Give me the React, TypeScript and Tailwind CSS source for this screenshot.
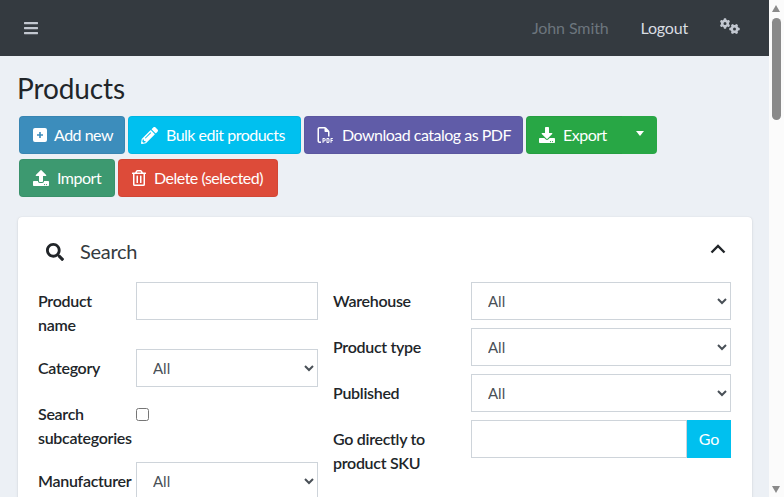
import type { ReactNode } from "react"
import { FaBars, FaDownload, FaPencilAlt, FaRegTrashAlt, FaSearch, FaUpload } from "react-icons/fa"
import { FaGears, FaRegFilePdf } from "react-icons/fa6"

function ActionButton({ icon, label, className }: { icon: ReactNode; label: string; className: string }) {
  return (
    <button className={`h-[38px] flex items-center rounded border border-black/5 text-white text-base tracking-[-0.5px] whitespace-nowrap pl-3 ${className}`}>
      {icon}
      {label}
    </button>
  )
}

function Label({ children, wide }: { children: ReactNode; wide?: boolean }) {
  return (
    <label className={`shrink-0 pt-[7px] pb-3 font-semibold leading-6 tracking-[-0.3px] text-[#212529] ${wide ? "w-[138px]" : "w-[98px]"}`}>
      {children}
    </label>
  )
}

function AllSelect() {
  return (
    <select className="w-full h-[38px] mb-2 pl-3 bg-white border border-[#ced4da] text-[#495057] text-[15px]">
      <option>All</option>
    </select>
  )
}

export default function App() {
  return (
    <div className="min-h-[2256px] bg-[#ecf0f5] font-['Lato','Liberation_Sans',sans-serif] text-base">
      <nav className="h-14 bg-[#343a40] flex items-center pl-6 pr-[44px]">
        <FaBars className="w-[14px] h-4 text-[#c2c7d0]" />
        <span className="ml-auto text-[#6c757d] tracking-[-0.1px]">John Smith</span>
        <a className="ml-8 text-[#d9dde2] tracking-[-0.2px]">Logout</a>
        <FaGears className="ml-[32px] w-5 h-4 mb-1 text-[#c2c7d0]" />
      </nav>

      <div className="pl-[17px] pt-4 w-[750px]">
        <h1 className="text-[28px] leading-[32px] tracking-[-0.1px] text-[#212529]">Products</h1>

        <div className="flex flex-wrap gap-x-[3px] gap-y-[5px] ml-0.5 mt-3">
          <ActionButton
            className="w-[106px] bg-[#3c8dbc]"
            icon={
              <svg className="w-[14px] h-[14px] mr-[7px] ml-px" viewBox="0 0 14 14" fill="currentColor">
                <path fillRule="evenodd" d="M2 0h10a2 2 0 0 1 2 2v10a2 2 0 0 1-2 2H2a2 2 0 0 1-2-2V2a2 2 0 0 1 2-2Zm4.2 4v2.2H4v1.6h2.2V10h1.6V7.800H10V6.200H7.800V4H6.200Z" />
              </svg>
            }
            label="Add new"
          />
          <ActionButton className="w-[173px] bg-[#00c0ef]" icon={<FaPencilAlt className="w-[17px] h-[17px] mr-2" />} label="Bulk edit products" />
          <ActionButton className="w-[219px] bg-[#605ca8]" icon={<FaRegFilePdf className="w-[17px] h-4 mr-2" />} label="Download catalog as PDF" />
          <div className="flex w-[131px]">
            <ActionButton className="w-[96px] bg-[#28a745] rounded-r-none border-r-0" icon={<FaDownload className="w-4 h-4 mr-2" />} label="Export" />
            <button className="w-[35px] h-[38px] flex items-center justify-center rounded-r bg-[#28a745]">
              <span className="mb-1 border-x-4 border-t-[5px] border-x-transparent border-t-white" />
            </button>
          </div>
        </div>
        <div className="flex gap-x-[3px] ml-0.5 mt-[5px]">
          <ActionButton className="w-[96px] bg-[#3d9970]" icon={<FaUpload className="w-4 h-4 mr-2 ml-px" />} label="Import" />
          <ActionButton className="w-[160px] bg-[#dd4b39]" icon={<FaRegTrashAlt className="w-[14px] h-4 mr-2 ml-px" />} label="Delete (selected)" />
        </div>

        <section className="mt-5 ml-px w-[734px] bg-white rounded shadow-[0_0_1px_rgba(0,0,0,0.13),0_1px_3px_rgba(0,0,0,0.1)] pl-5 pr-[21px] pt-5 pb-6">
          <div className="flex items-center h-[30px] mb-[15px] pl-2">
            <FaSearch className="w-[18px] h-[18px] text-[#212529]" />
            <span className="ml-4 mb-0.5 text-xl tracking-[-0.3px] text-[#343a40]">Search</span>
            <svg className="ml-auto mr-[5px] mb-1.5 w-4 h-[10px] text-[#212529]" viewBox="0 0 16 10" fill="none" stroke="currentColor" strokeWidth="2.4">
              <path d="M1.5 8.500 8 2l6.500 6.500" />
            </svg>
          </div>

          <div className="flex gap-[15px] items-start">
            <div className="w-[280px]">
              <div className="flex items-start">
                <Label>
                  Product
                  <br />
                  name
                </Label>
                <input className="w-full h-[38px] mb-2 bg-white border border-[#ced4da]" type="text" />
              </div>
              <div className="flex items-start">
                <Label>Category</Label>
                <AllSelect />
              </div>
              <div className="flex items-start">
                <Label>Search subcategories</Label>
                <input className="mt-[13px] w-[13px] h-[13px]" type="checkbox" />
              </div>
              <div className="flex items-start">
                <Label>Manufacturer</Label>
                <AllSelect />
              </div>
            </div>

            <div className="w-[398px]">
              <div className="flex items-start">
                <Label wide>Warehouse</Label>
                <AllSelect />
              </div>
              <div className="flex items-start">
                <Label wide>Product type</Label>
                <AllSelect />
              </div>
              <div className="flex items-start">
                <Label wide>Published</Label>
                <AllSelect />
              </div>
              <div className="flex items-start">
                <Label wide>Go directly to product SKU</Label>
                <div className="flex w-full h-[38px]">
                  <input className="min-w-0 flex-1 bg-white border border-[#ced4da]" type="text" />
                  <button className="w-11 bg-[#00c0ef] text-white">Go</button>
                </div>
              </div>
            </div>
          </div>
        </section>
      </div>

      {/* window scrollbar, headless browser hides the real one */}
      <div className="fixed top-0 right-0 h-screen w-[15px] bg-[#fbfbfb]">
        <span className="absolute top-[5px] left-[3px] border-x-[4.5px] border-b-[7px] border-x-transparent border-b-[#8a8a8a]" />
        <span className="absolute top-[18px] left-[3px] w-[9px] h-[102px] rounded-full bg-[#8a8a8a]" />
        <span className="absolute bottom-[4px] left-[3px] border-x-[4.5px] border-t-[7px] border-x-transparent border-t-[#8a8a8a]" />
      </div>
    </div>
  )
}
